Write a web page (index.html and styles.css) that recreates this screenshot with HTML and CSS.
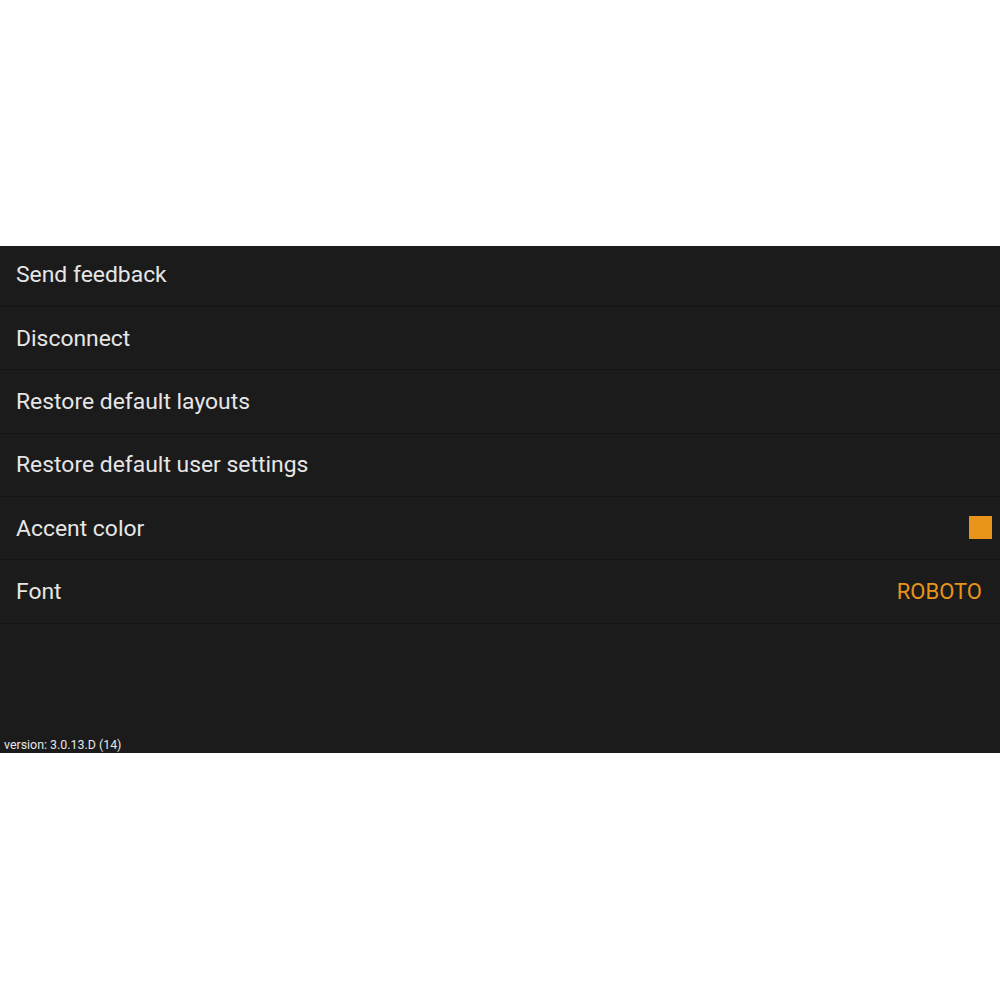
FILE: index.html
```html
<!DOCTYPE html>
<html lang="en">
<head>
    <meta charset="UTF-8">
    <meta name="viewport" content="width=device-width, initial-scale=1.0">
    <title>Settings</title>
    <link rel="stylesheet" href="styles.css">
</head>
<body>
<div class="panel">
    <div class="list">
        <div class="row">Send feedback</div>
        <div class="row">Disconnect</div>
        <div class="row">Restore default layouts</div>
        <div class="row">Restore default user settings</div>
        <div class="row">
            <span>Accent color</span>
            <span class="swatch"></span>
        </div>
        <div class="row">
            <span>Font</span>
            <span class="value">ROBOTO</span>
        </div>
    </div>
    <div class="version">version: 3.0.13.D (14)</div>
</div>
</body>
</html>
```

FILE: styles.css
```css
body {
    margin: 0;
    background-color: #ffffff;
    font-family: Roboto, "Noto Sans", sans-serif;
    padding-top: 246px;
}
.panel {
    height: 507px;
    background-color: #1b1b1b;
    display: flex;
    flex-direction: column;
    overflow: hidden;
}
.list {
    margin-top: -2.5px;
}
.row {
    height: 63.4px;
    box-sizing: border-box;
    border-bottom: 1px solid #131313;
    display: flex;
    align-items: center;
    justify-content: space-between;
    padding: 0 8px 0 16px;
    color: #e6e6e6;
    font-size: 22.9px;
}
.swatch {
    width: 23px;
    height: 23px;
    margin-top: -2px;
    background-color: #e8931a;
}
.value {
    color: #e8931a;
    margin-right: 10px;
    font-size: 22px;
}
.version {
    margin-top: auto;
    padding: 0 0 1px 4px;
    color: #e6e6e6;
    font-size: 12.4px;
}
```
